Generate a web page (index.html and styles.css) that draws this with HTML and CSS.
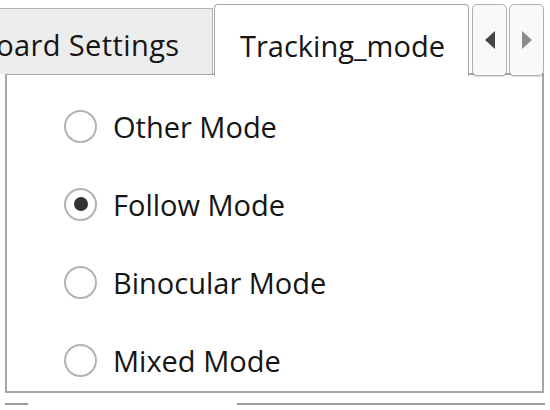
FILE: index.html
```html
<!DOCTYPE html>
<html lang="en">
<head>
<meta charset="utf-8"/>
<title>Tracking_mode</title>
<link rel="stylesheet" href="styles.css">
</head>
<body>
<div class="window">
<div class="tab-bar">
<div class="tab">Board Settings</div>
<div class="tab active">Tracking_mode</div>
<div class="scroll-buttons">
<div class="scroll-btn"><span class="arrow left"></span></div>
<div class="scroll-btn"><span class="arrow right"></span></div>
</div>
</div>
<div class="pane">
<label class="radio-row"><span class="radio"></span>Other Mode</label>
<label class="radio-row"><span class="radio checked"></span>Follow Mode</label>
<label class="radio-row"><span class="radio"></span>Binocular Mode</label>
<label class="radio-row"><span class="radio"></span>Mixed Mode</label>
</div>
<div class="group-line">
<span class="seg short"></span>
<span class="seg long"></span>
</div>
</div>
</body>
</html>
```

FILE: styles.css
```css
body {
    margin: 0;
    padding: 0;
    background: #fff;
    font-family: 'Open Sans', 'Noto Sans', sans-serif;
    color: #151515;
}
.window {
    width: 550px;
    height: 410px;
    overflow: hidden;
    position: relative;
}
.tab-bar {
    display: flex;
    align-items: flex-end;
    height: 76px;
}
.tab {
    box-sizing: border-box;
    height: 66px;
    margin-bottom: 2px;
    margin-left: -50px;
    width: 263px;
    padding-left: 26px;
    background: #ececec;
    border: 1px solid #b4b4b4;
    border-bottom: none;
    font-size: 29px;
    line-height: 72px;
    letter-spacing: 0.4px;
    white-space: nowrap;
}
.tab.active {
    position: relative;
    z-index: 1;
    margin-left: 1px;
    margin-bottom: 0;
    width: 255px;
    height: 72px;
    padding-left: 25px;
    background: #fff;
    border-color: #a8a8a8;
    border-radius: 4px 4px 0 0;
    line-height: 82px;
    letter-spacing: 0;
}
.scroll-buttons {
    display: flex;
    gap: 2px;
    margin-left: 3px;
    position: relative;
    z-index: 1;
}
.scroll-btn {
    box-sizing: border-box;
    width: 35px;
    height: 72px;
    border: 1px solid #b0b0b0;
    border-radius: 5px;
    background: #f9f9f9;
    box-shadow: 0 1px 1px rgba(0, 0, 0, 0.15);
    display: flex;
    align-items: center;
    justify-content: center;
}
.arrow {
    width: 0;
    height: 0;
    border-top: 9px solid transparent;
    border-bottom: 9px solid transparent;
}
.arrow.left {
    border-right: 10px solid #444;
}
.arrow.right {
    border-left: 10px solid #8a8a8a;
}
.pane {
    box-sizing: border-box;
    margin: -3px 0 0 5px;
    width: 539px;
    height: 320px;
    border: 2px solid #a6a6a6;
    padding: 12px 0 0 57px;
    display: flex;
    flex-direction: column;
}
.radio-row {
    display: flex;
    flex-shrink: 0;
    align-items: center;
    height: 78px;
    font-size: 29px;
}
.radio {
    box-sizing: border-box;
    width: 33px;
    height: 33px;
    margin-right: 16px;
    border: 2px solid #b2b2b2;
    border-radius: 50%;
    background: #fff;
    display: flex;
    align-items: center;
    justify-content: center;
}
.radio.checked::after {
    content: "";
    width: 14px;
    height: 14px;
    border-radius: 50%;
    background: #333;
}
.group-line {
    display: flex;
    margin: 10px 0 0 5px;
}
.seg {
    height: 2px;
    background: #9c9c9c;
}
.seg.short {
    width: 23px;
}
.seg.long {
    width: 308px;
    margin-left: 209px;
}
```
